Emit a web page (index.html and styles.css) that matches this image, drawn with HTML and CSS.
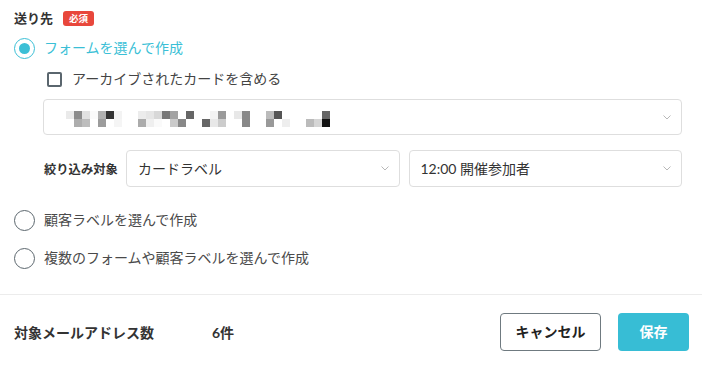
FILE: index.html
```html
<!DOCTYPE html>
<html lang="ja">
<head>
<meta charset="utf-8">
<title>送り先</title>
<link rel="stylesheet" href="styles.css">
</head>
<body>
<div class="form">
  <div class="field-head">
    <span class="field-title">送り先</span>
    <span class="badge">必須</span>
  </div>

  <div class="radio-row is-checked">
    <span class="radio"></span>
    <span class="radio-text">フォームを選んで作成</span>
  </div>

  <div class="sub">
    <div class="check-row">
      <span class="checkbox"></span>
      <span class="check-text">アーカイブされたカードを含める</span>
    </div>

    <div class="select select-wide">
      <svg class="mosaic" width="264" height="16" viewBox="0 0 264 16">
        <rect x="0" y="0" width="8" height="8" fill="#eaeaea"/>
        <rect x="8" y="0" width="8" height="8" fill="#8c8c8c"/>
        <rect x="8" y="8" width="8" height="8" fill="#adadad"/>
        <rect x="16" y="0" width="8" height="8" fill="#e2e2e2"/>
        <rect x="16" y="8" width="8" height="8" fill="#bdbdbd"/>
        <rect x="24" y="0" width="8" height="8" fill="#fafafa"/>
        <rect x="32" y="0" width="8" height="8" fill="#b0b0b0"/>
        <rect x="32" y="8" width="8" height="8" fill="#9c9c9c"/>
        <rect x="40" y="0" width="8" height="8" fill="#333333"/>
        <rect x="48" y="0" width="8" height="8" fill="#f3f3f3"/>
        <rect x="48" y="8" width="8" height="8" fill="#f5f5f5"/>
        <rect x="72" y="0" width="8" height="8" fill="#ececec"/>
        <rect x="72" y="8" width="8" height="8" fill="#ababab"/>
        <rect x="80" y="0" width="8" height="8" fill="#e6e6e6"/>
        <rect x="80" y="8" width="8" height="8" fill="#efefef"/>
        <rect x="88" y="0" width="8" height="8" fill="#d8d8d8"/>
        <rect x="88" y="8" width="8" height="8" fill="#fafafa"/>
        <rect x="96" y="0" width="8" height="8" fill="#777777"/>
        <rect x="104" y="0" width="8" height="8" fill="#a3a3a3"/>
        <rect x="104" y="8" width="8" height="8" fill="#cacaca"/>
        <rect x="112" y="8" width="8" height="8" fill="#888888"/>
        <rect x="120" y="0" width="8" height="8" fill="#666666"/>
        <rect x="136" y="8" width="8" height="8" fill="#666666"/>
        <rect x="144" y="0" width="8" height="8" fill="#f3f3f3"/>
        <rect x="144" y="8" width="8" height="8" fill="#e8e8e8"/>
        <rect x="152" y="0" width="8" height="8" fill="#9a9a9a"/>
        <rect x="152" y="8" width="8" height="8" fill="#cccccc"/>
        <rect x="168" y="0" width="8" height="8" fill="#e8e8e8"/>
        <rect x="176" y="0" width="8" height="8" fill="#888888"/>
        <rect x="176" y="8" width="8" height="8" fill="#888888"/>
        <rect x="200" y="0" width="8" height="8" fill="#bbbbbb"/>
        <rect x="200" y="8" width="8" height="8" fill="#999999"/>
        <rect x="208" y="0" width="8" height="8" fill="#555555"/>
        <rect x="216" y="8" width="8" height="8" fill="#eeeeee"/>
        <rect x="240" y="8" width="8" height="8" fill="#bbbbbb"/>
        <rect x="248" y="8" width="8" height="8" fill="#d5d5d5"/>
        <rect x="256" y="0" width="8" height="8" fill="#666666"/>
        <rect x="256" y="8" width="8" height="8" fill="#111111"/>
      </svg>
      <svg class="chev" width="8" height="5" viewBox="0 0 8 5"><polyline points="0.5,0.5 4,4 7.5,0.5" fill="none" stroke="#b8b8b8" stroke-width="1"/></svg>
    </div>

    <div class="filter-row">
      <span class="filter-label">絞り込み対象</span>
      <div class="select select-half">
        <span class="select-text">カードラベル</span>
        <svg class="chev" width="8" height="5" viewBox="0 0 8 5"><polyline points="0.5,0.5 4,4 7.5,0.5" fill="none" stroke="#b8b8b8" stroke-width="1"/></svg>
      </div>
      <div class="select select-half">
        <span class="select-text">12:00 開催参加者</span>
        <svg class="chev" width="8" height="5" viewBox="0 0 8 5"><polyline points="0.5,0.5 4,4 7.5,0.5" fill="none" stroke="#b8b8b8" stroke-width="1"/></svg>
      </div>
    </div>
  </div>

  <div class="radio-row radio-second">
    <span class="radio"></span>
    <span class="radio-text">顧客ラベルを選んで作成</span>
  </div>
  <div class="radio-row radio-third">
    <span class="radio"></span>
    <span class="radio-text">複数のフォームや顧客ラベルを選んで作成</span>
  </div>
</div>

<div class="divider"></div>

<div class="footer">
  <span class="count-label">対象メールアドレス数</span>
  <span class="count-value">6件</span>
  <div class="actions">
    <button class="btn btn-cancel" type="button">キャンセル</button>
    <button class="btn btn-save" type="button">保存</button>
  </div>
</div>
</body>
</html>
```

FILE: styles.css
```css
* {
  box-sizing: border-box;
}

html, body {
  margin: 0;
  padding: 0;
  background: #ffffff;
}

body {
  width: 702px;
  height: 367px;
  overflow: hidden;
  font-family: Lato, "Noto Sans CJK JP", sans-serif;
  color: #333333;
  font-size: 14px;
}

.form {
  padding: 8px 20px 0 14px;
}

.field-head {
  display: flex;
  align-items: center;
  height: 21px;
}

.field-title {
  font-size: 13px;
  font-weight: 700;
  color: #333333;
  line-height: 1;
}

.badge {
  margin-left: 10px;
  width: 31px;
  height: 15px;
  border-radius: 3px;
  background: #e8473c;
  color: #ffffff;
  font-size: 9.5px;
  font-weight: 700;
  display: flex;
  align-items: center;
  justify-content: center;
  line-height: 1;
}

.radio-row {
  display: flex;
  align-items: center;
  height: 22px;
}

.is-checked {
  margin-top: 8px;
}

.radio {
  width: 21px;
  height: 21px;
  border: 1.5px solid #5c676e;
  border-radius: 50%;
  margin-right: 9px;
  position: relative;
  flex: none;
}

.is-checked .radio {
  border-color: #3bbfd6;
}

.is-checked .radio::after {
  content: "";
  position: absolute;
  left: 50%;
  top: 50%;
  width: 11px;
  height: 11px;
  margin: -5.5px 0 0 -5.5px;
  border-radius: 50%;
  background: #3bbfd6;
}

.radio-text {
  font-size: 14px;
  color: #4a4a4a;
  line-height: 1;
}

.is-checked .radio-text {
  color: #3bbfd6;
}

.radio-second {
  margin-top: 22px;
}

.radio-third {
  margin-top: 16px;
}

.sub {
  padding-left: 29px;
}

.check-row {
  display: flex;
  align-items: center;
  height: 20px;
  margin-top: 10px;
  padding-left: 4px;
}

.checkbox {
  width: 15px;
  height: 15px;
  border: 2px solid #5a666e;
  border-radius: 2px;
  margin-right: 10px;
  flex: none;
}

.check-text {
  font-size: 14px;
  color: #444444;
  line-height: 1;
}

.select {
  display: flex;
  align-items: center;
  border: 1px solid #dedede;
  border-radius: 4px;
  background: #ffffff;
  padding-right: 10px;
}

.select-wide {
  margin-top: 10px;
  height: 36px;
  padding-left: 22px;
}

.mosaic {
  display: block;
  margin-top: 3px;
}

.chev {
  display: block;
  margin-left: auto;
  flex: none;
}

.filter-row {
  display: flex;
  align-items: center;
  gap: 9px;
  margin-top: 15px;
}

.filter-label {
  width: 74px;
  padding-left: 1px;
  font-size: 12.3px;
  font-weight: 700;
  color: #333333;
  white-space: nowrap;
}

.select-half {
  flex: 1;
  height: 37px;
  padding-left: 11px;
}

.select-text {
  font-size: 14px;
  color: #333333;
  line-height: 1;
}

.divider {
  margin-top: 25px;
  height: 1px;
  background: #ececec;
}

.footer {
  display: flex;
  align-items: center;
  padding: 18px 13px 0 14px;
}

.count-label {
  width: 198px;
  font-size: 14px;
  font-weight: 700;
  color: #333333;
  white-space: nowrap;
}

.count-value {
  font-size: 14px;
  font-weight: 700;
  color: #333333;
}

.actions {
  margin-left: auto;
  display: flex;
  gap: 17px;
}

.btn {
  height: 38px;
  border-radius: 4px;
  font-family: Lato, "Noto Sans CJK JP", sans-serif;
  font-size: 14px;
  font-weight: 700;
  padding: 0;
  line-height: 1;
}

.btn-cancel {
  width: 101px;
  border: 1px solid #6f7a80;
  background: #ffffff;
  color: #222222;
}

.btn-save {
  width: 71px;
  border: none;
  background: #37bdd5;
  color: #ffffff;
}
```
